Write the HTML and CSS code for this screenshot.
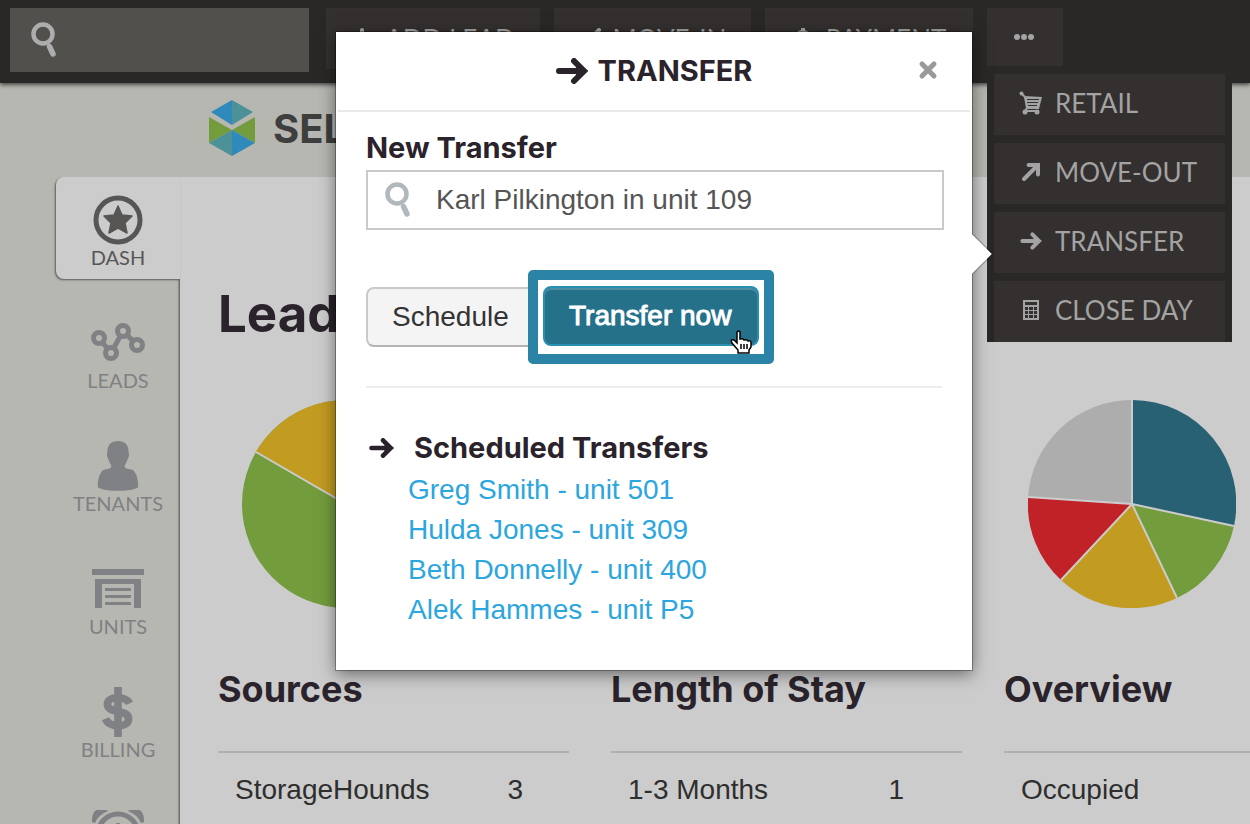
FILE: index.html
```html
<!DOCTYPE html>
<html lang="en">
<head>
    <meta charset="UTF-8">
    <meta name="viewport" content="width=device-width, initial-scale=1.0">
    <title>Dashboard - Transfer</title>
    <link rel="stylesheet" href="styles.css">
</head>
<body>
    <!-- Shared icons -->
    <svg class="icon-defs" aria-hidden="true">
        <symbol id="icon-search" viewBox="0 0 26 36">
            <circle cx="12" cy="12" r="9.5" fill="none" stroke="currentColor" stroke-width="4.5"/>
            <path d="M18.5 24.5l3.5 7.500" fill="none" stroke="currentColor" stroke-width="5.500" stroke-linecap="round"/>
        </symbol>
        <symbol id="icon-arrow" viewBox="0 0 32 26">
            <path d="M3 13h22" fill="none" stroke="currentColor" stroke-width="6" stroke-linecap="round"/>
            <path d="M18 3l10 10-10 10" fill="none" stroke="currentColor" stroke-width="6" stroke-linecap="round"/>
            <path d="M20 5l12 8-12 8z" fill="currentColor"/>
        </symbol>
    </svg>

    <!-- Top Bar -->
    <header class="topbar">
        <form class="search">
            <label for="site-search"><svg class="search-icon"><use href="#icon-search"/></svg></label>
            <input type="text" id="site-search" aria-label="Search">
        </form>
        <nav class="actions">
            <button type="button" class="action add-lead">
                <svg viewBox="0 0 22 22"><path d="M11 2v18M2 11h18" fill="none" stroke="currentColor" stroke-width="4" stroke-linecap="round"/></svg>
                ADD LEAD
            </button>
            <button type="button" class="action move-in">
                <svg viewBox="0 0 22 22"><path d="M20 2L7 15" fill="none" stroke="currentColor" stroke-width="4" stroke-linecap="round"/><path d="M3 6v13h13l-3-4H8l-1-7z" fill="currentColor"/></svg>
                MOVE-IN
            </button>
            <button type="button" class="action payment">
                <svg viewBox="0 0 22 22"><path d="M11 0v22M16 7c-1-4-10-4-10 0 0 5 11 3 11 8 0 4-10 5-12 0" fill="none" stroke="currentColor" stroke-width="4"/></svg>
                PAYMENT
            </button>
            <div class="more">
                <button type="button" class="action more-button" aria-label="More">
                    <svg viewBox="0 0 22 6"><g fill="currentColor"><circle cx="3" cy="3" r="3"/><circle cx="10" cy="3" r="3"/><circle cx="17" cy="3" r="3"/></g></svg>
                </button>
                <ul class="more-menu">
                    <li><a href="#">
                        <svg viewBox="0 0 24 24"><circle cx="2.500" cy="2.500" r="2" fill="currentColor"/><path d="M2 2l4 4 2 11-2 3h14" fill="none" stroke="currentColor" stroke-width="2"/><path d="M5 5l18 1-3 12H8zM8 8v1h12V8zm0 3v1h11v-1zm1 3v1h9v-1z" fill="currentColor" fill-rule="evenodd"/><circle cx="6" cy="21" r="2.500" fill="currentColor"/><circle cx="18" cy="21" r="2.500" fill="currentColor"/></svg>
                        RETAIL</a></li>
                    <li><a href="#">
                        <svg viewBox="0 0 24 24"><path d="M5 19L17 7" fill="none" stroke="currentColor" stroke-width="4" stroke-linecap="round"/><path d="M9 3h12v12q-2 3-4 0V9l-2-2H9q-3-2 0-4z" fill="currentColor"/></svg>
                        MOVE-OUT</a></li>
                    <li><a href="#">
                        <svg viewBox="0 0 36 30"><path d="M5 15h20M20 5l10 10-10 10" fill="none" stroke="currentColor" stroke-width="6" stroke-linecap="round"/><path d="M22 7l12 8-12 8z" fill="currentColor"/></svg>
                        TRANSFER</a></li>
                    <li><a href="#">
                        <svg viewBox="0 0 24 24"><path d="M4 2h16v20H4zM6 4v3h12V4zM6 9v3h3V9zm4 0v3h4V9zm5 0v3h3V9zM6 13v3h3v-3zm4 0v3h4v-3zm5 0v3h3v-3zM6 17v3h3v-3zm4 0v3h4v-3zm5 0v3h3v-3z" fill="currentColor" fill-rule="evenodd"/></svg>
                        CLOSE DAY</a></li>
                </ul>
            </div>
        </nav>
    </header>

    <!-- Brand -->
    <div class="brand">
        <svg class="brand-logo" viewBox="0 0 46 56">
            <path d="M2 12L23 0v25z" fill="#2f8abb"/>
            <path d="M23 0l21 12-21 13z" fill="#4b9197"/>
            <path d="M0 17l23 13L0 43z" fill="#739c3d"/>
            <path d="M46 17L23 30l23 13z" fill="#739c3d"/>
            <path d="M0 43l23-13v26z" fill="#4b9197"/>
            <path d="M46 43L23 30v26z" fill="#2f8abb"/>
        </svg>
        <span>SELF</span>
    </div>

    <div class="page">
        <!-- Side Navigation -->
        <nav class="sidebar">
            <a href="#" class="tab active">
                <svg viewBox="0 0 50 50"><circle cx="25" cy="25" r="22" fill="none" stroke="currentColor" stroke-width="5"/><path d="M25 11l4 9 10 1-7 7 2 10-9-5-9 5 2-10-7-7 10-1z" fill="currentColor" stroke="currentColor" stroke-width="1.500" stroke-linejoin="round"/></svg>
                <span>DASH</span>
            </a>
            <a href="#" class="tab">
                <svg viewBox="0 0 56 50"><path d="M9 20l12 15L33 13l14 14" fill="none" stroke="currentColor" stroke-width="5"/><g fill="#b6b7b0" stroke="currentColor" stroke-width="5"><circle cx="9" cy="20" r="5.500"/><circle cx="21" cy="35" r="5.500"/><circle cx="33" cy="13" r="5.500"/><circle cx="47" cy="27" r="5.500"/></g></svg>
                <span>LEADS</span>
            </a>
            <a href="#" class="tab">
                <svg viewBox="0 0 44 52"><path d="M22 0c7 0 11 4 11 11 1 4 0 6-1 8-1 4-3 5-3 8 1 2 4 2 8 3 5 4 6 11 6 18-6 5-36 5-42 0 0-7 1-14 6-18 4-1 7-1 8-3 0-3-2-4-3-8-1-2-2-4-1-8C11 4 15 0 22 0z" fill="currentColor"/></svg>
                <span>TENANTS</span>
            </a>
            <a href="#" class="tab">
                <svg viewBox="0 0 52 50"><path d="M0 5h52v6H0zM3 15h46v29h-7V20H10v24H3zM13 24h26v3H13zm0 7h26v3H13zm0 7h26v3H13z" fill="currentColor"/></svg>
                <span>UNITS</span>
            </a>
            <a href="#" class="tab">
                <svg viewBox="0 0 34 52"><path d="M13 0h8v52h-8z" fill="currentColor"/><path d="M29 17C25 9 6 9 6 18c0 10 22 5 22 15 0 10-20 10-24 0" fill="none" stroke="currentColor" stroke-width="8"/></svg>
                <span>BILLING</span>
            </a>
            <a href="#" class="tab" aria-label="Reminders">
                <svg viewBox="0 0 52 50"><circle cx="26" cy="24" r="20" fill="none" stroke="currentColor" stroke-width="5"/><path d="M0 12C-1-2 10-4 16 1Q6 5 3 13zM52 12C53-2 42-4 36 1q10 4 13 12z" fill="currentColor"/><path d="M26 13v12l8 5" fill="none" stroke="currentColor" stroke-width="4"/></svg>
            </a>
        </nav>

        <!-- Dashboard -->
        <main class="dashboard">
            <h1>Leads</h1>
            <div class="columns">
                <section class="column">
                    <svg class="pie" viewBox="-104 -104 208 208">
                        <circle r="104" fill="#739c3d"/>
                        <path d="M0 0L-90 -52A104 104 0 0 1 0 -104z" fill="#c29b21"/>
                        <path d="M-90 -52L0 0V-104" fill="none" stroke="#ccc" stroke-width="2"/>
                    </svg>
                    <h2>Sources</h2>
                    <table class="stats">
                        <tr><th scope="row">StorageHounds</th><td>3</td></tr>
                    </table>
                </section>
                <section class="column">
                    <svg class="pie" viewBox="-104 -104 208 208"><circle r="104" fill="#286173"/></svg>
                    <h2>Length of Stay</h2>
                    <table class="stats stay">
                        <tr><th scope="row">1-3 Months</th><td>1</td></tr>
                    </table>
                </section>
                <section class="column">
                    <svg class="pie" viewBox="-104 -104 208 208">
                        <path d="M0 0V-104A104 104 0 0 1 102 22z" fill="#286173"/>
                        <path d="M0 0L102 22A104 104 0 0 1 45 94z" fill="#739c3d"/>
                        <path d="M0 0L45 94A104 104 0 0 1 -71 76z" fill="#c29b21"/>
                        <path d="M0 0L-71 76A104 104 0 0 1 -104 -7z" fill="#c02227"/>
                        <path d="M0 0L-104 -7A104 104 0 0 1 0 -104z" fill="#adadad"/>
                        <path d="M0 0V-104M0 0L102 22M0 0L45 94M0 0L-71 76M0 0L-104 -7" stroke="#ccc" stroke-width="2"/>
                    </svg>
                    <h2>Overview</h2>
                    <table class="stats">
                        <tr><th scope="row">Occupied</th><td></td></tr>
                    </table>
                </section>
            </div>
        </main>
    </div>

    <!-- Transfer Dialog -->
    <div class="dialog" role="dialog" aria-labelledby="dialog-title">
        <div class="dialog-header">
            <svg class="title-arrow"><use href="#icon-arrow"/></svg>
            <h2 id="dialog-title">TRANSFER</h2>
            <button type="button" class="close" aria-label="Close">
                <svg viewBox="0 0 20 20"><path d="M4 4l12 12M16 4L4 16" stroke="currentColor" stroke-width="5" stroke-linecap="round"/></svg>
            </button>
        </div>
        <form class="dialog-body">
            <label class="field-label" for="tenant">New Transfer</label>
            <div class="field">
                <svg class="search-icon"><use href="#icon-search"/></svg>
                <input type="text" id="tenant" value="Karl Pilkington in unit 109">
            </div>
            <div class="buttons">
                <button type="button" class="btn">Schedule</button>
                <div class="highlight">
                    <button type="button" class="btn btn-primary">Transfer now</button>
                    <svg class="cursor" viewBox="0 0 22 24">
                        <path d="M7 2q2-2 3 0v7q3-1 4 1 3-1 4 1 3-1 3 2v4l-2 3v3H8v-3l-6-7q-2-4 2-3l3 3z" fill="#fff" stroke="#000" stroke-width="1.500"/>
                        <path d="M11 14v5M14 14v5M17 14v5" stroke="#000" stroke-width="1.500"/>
                    </svg>
                </div>
            </div>
            <div class="scheduled">
                <h3><svg class="list-arrow"><use href="#icon-arrow"/></svg>Scheduled Transfers</h3>
                <ul>
                    <li><a href="#">Greg Smith - unit 501</a></li>
                    <li><a href="#">Hulda Jones - unit 309</a></li>
                    <li><a href="#">Beth Donnelly - unit 400</a></li>
                    <li><a href="#">Alek Hammes - unit P5</a></li>
                </ul>
            </div>
        </form>
    </div>
</body>
</html>
```
FILE: styles.css
```css
/* General Styles */
* {
    box-sizing: border-box;
}

body {
    margin: 0;
    height: 100vh;
    overflow: hidden;
    position: relative;
    display: flex;
    flex-direction: column;
    background-color: #b6b7b0;
    color: #2a232b;
    font-family: "Liberation Sans", Arial, sans-serif;
    font-size: 28px;
}

h1, h2, h3 {
    margin: 0;
    font-family: Inter, sans-serif;
    font-weight: 700;
}

ul {
    list-style: none;
    margin: 0;
    padding: 0;
}

a {
    text-decoration: none;
}

button, input {
    font: inherit;
    margin: 0;
    border: none;
}

.icon-defs {
    position: absolute;
    width: 0;
    height: 0;
}

.search-icon {
    width: 26px;
    height: 36px;
    display: block;
}

/* Top Bar */
.topbar {
    flex: none;
    height: 83px;
    padding: 8px 10px;
    display: flex;
    align-items: flex-start;
    gap: 17px;
    background-color: #292826;
    box-shadow: 0 2px 4px rgba(0, 0, 0, 0.6);
    z-index: 1;
}

.search {
    flex: none;
    width: 299px;
    height: 64px;
    padding-left: 21px;
    display: flex;
    align-items: center;
    background-color: #51504d;
    color: #adadad;
}

.search input {
    width: 100%;
    height: 64px;
    padding: 0 16px;
    background: none;
    color: #ccc;
}

.actions {
    display: flex;
    gap: 14px;
}

.action {
    height: 61px;
    padding: 0;
    display: flex;
    align-items: center;
    justify-content: center;
    gap: 12px;
    background-color: #34302f;
    color: #a3a3a3;
    font-family: Lato, sans-serif;
    font-size: 26px;
    white-space: nowrap;
}

.action svg {
    width: 22px;
    height: 22px;
}

.add-lead {
    width: 214px;
}

.move-in {
    width: 197px;
}

.payment {
    width: 208px;
}

.more {
    position: relative;
}

.more-button {
    width: 76px;
    height: 58px;
}

.more-menu {
    position: absolute;
    top: 58px;
    left: 0;
    width: 245px;
    padding: 8px 7px 0;
    display: flex;
    flex-direction: column;
    gap: 8px;
    background-color: #292826;
}

.more-menu a {
    height: 61px;
    padding: 0 0 4px 25px;
    display: flex;
    align-items: center;
    gap: 12px;
    background-color: #34302f;
    color: #a3a3a3;
    font-family: Lato, sans-serif;
    font-size: 26px;
}

.more-menu svg {
    width: 24px;
    height: 24px;
}

/* Brand */
.brand {
    flex: none;
    height: 94px;
    padding: 0 0 4px 209px;
    display: flex;
    align-items: center;
    gap: 18px;
    color: #3e3e3e;
    font-family: Inter, sans-serif;
    font-weight: 700;
    font-size: 40px;
}

.brand-logo {
    width: 46px;
    height: 56px;
}

/* Side Navigation */
.page {
    flex: 1;
    min-height: 0;
    overflow: hidden;
    display: flex;
}

.sidebar {
    flex: none;
    width: 180px;
    padding-left: 56px;
    display: flex;
    flex-direction: column;
    gap: 21px;
}

.tab {
    flex: none;
    height: 102px;
    padding-top: 18px;
    display: flex;
    flex-direction: column;
    align-items: center;
    color: #808184;
    font-family: Lato, sans-serif;
    font-size: 20px;
    line-height: 24px;
}

.tab svg {
    width: 56px;
    height: 50px;
}

.active {
    position: relative;
    z-index: 1;
    background-color: #ccc;
    border-radius: 8px 0 0 8px;
    box-shadow: -1px 1px 2px rgba(0, 0, 0, 0.5);
    color: #575655;
}

/* Dashboard */
.dashboard {
    flex: 1;
    min-width: 0;
    overflow: hidden;
    padding: 106px 0 0 38px;
    background-color: #ccc;
    box-shadow: -1px 3px 2px rgba(0, 0, 0, 0.6);
}

.dashboard h1 {
    font-size: 51px;
    line-height: 62px;
}

.columns {
    margin-top: 55px;
    display: flex;
    gap: 42px;
}

.column {
    flex: none;
    width: 351px;
}

.pie {
    width: 208px;
    height: 208px;
    margin-left: 24px;
    display: block;
}

.column h2 {
    margin-top: 60px;
    font-size: 36px;
    line-height: 42px;
}

.stats {
    width: 100%;
    margin-top: 41px;
    border-top: 2px solid #b0b0b0;
    border-collapse: collapse;
    line-height: 40px;
    color: #2e2e2e;
}

.stats th {
    padding: 17px 0 0 17px;
    font-weight: normal;
    text-align: left;
}

.stats td {
    padding: 17px 46px 0 0;
    text-align: right;
}

.stay td {
    padding-right: 58px;
}

/* Transfer Dialog */
.dialog {
    position: absolute;
    top: 32px;
    left: 336px;
    z-index: 2;
    width: 636px;
    padding-bottom: 40px;
    background-color: #fff;
    box-shadow: 0 0 0 1px rgba(0, 0, 0, 0.3), 0 4px 16px rgba(0, 0, 0, 0.5);
}

/* Pointer towards the open menu item */
.dialog::after {
    content: "";
    position: absolute;
    top: 208px;
    right: -14px;
    width: 28px;
    height: 28px;
    background-color: #fff;
    box-shadow: 1px -1px 1px rgba(0, 0, 0, 0.3);
    transform: rotate(45deg);
}

.dialog-header {
    position: relative;
    height: 80px;
    margin: 0 2px;
    display: flex;
    align-items: center;
    justify-content: center;
    gap: 10px;
    border-bottom: 2px solid #e9e9e9;
}

.dialog-header h2 {
    font-size: 29px;
    line-height: 36px;
}

.title-arrow {
    width: 32px;
    height: 26px;
}

.close {
    position: absolute;
    top: 28px;
    right: 32px;
    width: 20px;
    height: 20px;
    padding: 0;
    background: none;
    color: #999;
}

.close svg {
    width: 20px;
    height: 20px;
    display: block;
}

.dialog-body {
    padding: 16px 28px 0 30px;
}

.field-label {
    display: block;
    padding-bottom: 2px;
    font-family: Inter, sans-serif;
    font-weight: 700;
    font-size: 29px;
    line-height: 40px;
}

.field {
    height: 60px;
    padding-left: 17px;
    display: flex;
    align-items: center;
    border: 2px solid #c9c9c9;
    color: #b0b8bb;
}

.field input {
    flex: 1;
    padding: 0 25px;
    background: none;
    color: #555;
}

.buttons {
    height: 94px;
    margin-top: 40px;
    display: flex;
    align-items: center;
}

.btn {
    width: 177px;
    height: 60px;
    padding: 0 24px;
    border: 2px solid #c9c9c9;
    border-bottom-color: #b3b3b3;
    border-radius: 8px;
    background-color: #f4f4f4;
    color: #333;
    text-align: left;
    white-space: nowrap;
}

.btn-primary {
    width: 216px;
    border-color: #2b8fb3;
    background-color: #25718a;
    box-shadow: inset 0 2px 0 #4f8da1;
    color: #fff;
    -webkit-text-stroke: 1px #fff;
}

.highlight {
    position: relative;
    flex: none;
    width: 246px;
    height: 94px;
    margin-left: -15px;
    padding: 6px 5px;
    border: 10px solid #2b84a6;
    border-radius: 5px;
    background-color: #fff;
}

.highlight .btn {
    display: block;
}

.cursor {
    position: absolute;
    right: 12px;
    bottom: 0;
    width: 22px;
    height: 24px;
}

.scheduled {
    margin: 22px 2px 0 0;
    padding-top: 40px;
    border-top: 2px solid #ececec;
}

.scheduled h3 {
    padding: 0 0 2px 3px;
    display: flex;
    align-items: center;
    gap: 20px;
    font-size: 29px;
    line-height: 40px;
}

.list-arrow {
    width: 25px;
    height: 20px;
}

.scheduled ul {
    padding-left: 42px;
    line-height: 40px;
}

.scheduled a {
    color: #2ba6de;
}
```
